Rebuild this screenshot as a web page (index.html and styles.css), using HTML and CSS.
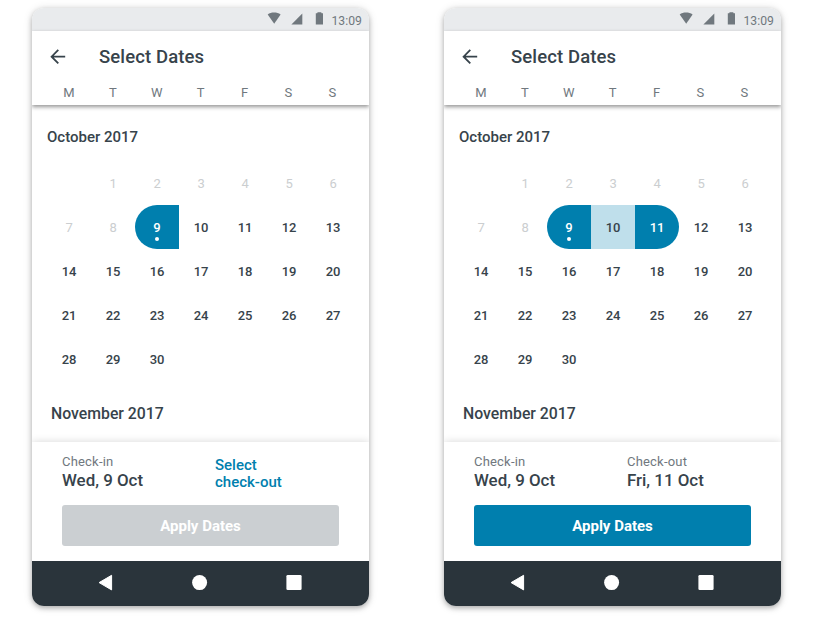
FILE: index.html
```html
<!DOCTYPE html>
<html lang="en">
<head>
<meta charset="utf-8">
<title>Select Dates</title>
<link rel="stylesheet" href="styles.css">
</head>
<body>
<main class="stage">
  <section class="phone">
    <div class="status">
      <svg class="wifi" width="14" height="12" viewBox="0 0 14 12"><path d="M0.7 2.4C4 0 10 0 13.6 2.4L7.2 11.7Z"/></svg>
      <svg class="signal" width="12" height="12" viewBox="0 0 12 12"><path d="M0.4 11.5L11.3 0.5V11.5Z"/></svg>
      <svg class="battery" width="8" height="13" viewBox="0 0 8 13"><path d="M2.6 0.3H6.2L6.6 1.3H8V12.5H0.8V1.3H2.2Z"/></svg>
      <span class="time">13:09</span>
    </div>
    <header class="header">
      <div class="titlebar">
        <svg class="back" width="16" height="16" viewBox="0 0 16 16"><path d="M15.2 7.7H1.6M8.3 0.9L1.6 7.7L8.3 14.4"/></svg>
        <h1>Select Dates</h1>
      </div>
      <div class="weekdays"><span>M</span><span>T</span><span>W</span><span>T</span><span>F</span><span>S</span><span>S</span></div>
    </header>
    <div class="calendar">
      <h2>October 2017</h2>
      <div class="days">
        <span></span><span class="past">1</span><span class="past">2</span><span class="past">3</span><span class="past">4</span><span class="past">5</span><span class="past">6</span>
        <span class="past">7</span><span class="past">8</span><span class="start">9</span><span>10</span><span>11</span><span>12</span><span>13</span>
        <span>14</span><span>15</span><span>16</span><span>17</span><span>18</span><span>19</span><span>20</span>
        <span>21</span><span>22</span><span>23</span><span>24</span><span>25</span><span>26</span><span>27</span>
        <span>28</span><span>29</span><span>30</span>
      </div>
      <h2 class="next-month">November 2017</h2>
    </div>
    <footer class="summary">
      <div class="stay">
        <div class="field"><small>Check-in</small><strong>Wed, 9 Oct</strong></div>
        <a class="prompt">Select<br>check-out</a>
      </div>
      <button class="apply disabled">Apply Dates</button>
    </footer>
    <nav class="nav">
      <svg width="16" height="18" viewBox="0 0 16 18"><path d="M1.1 8.6L13.6 1.3V15.9Z" stroke="#fff" stroke-linejoin="round"/></svg>
      <svg width="16" height="16" viewBox="0 0 16 16"><circle cx="7.6" cy="7.6" r="7.5"/></svg>
      <svg width="16" height="16" viewBox="0 0 16 16"><rect x="0.4" y="0" width="15.2" height="15" rx="1.3"/></svg>
    </nav>
  </section>

  <section class="phone">
    <div class="status">
      <svg class="wifi" width="14" height="12" viewBox="0 0 14 12"><path d="M0.7 2.4C4 0 10 0 13.6 2.4L7.2 11.7Z"/></svg>
      <svg class="signal" width="12" height="12" viewBox="0 0 12 12"><path d="M0.4 11.5L11.3 0.5V11.5Z"/></svg>
      <svg class="battery" width="8" height="13" viewBox="0 0 8 13"><path d="M2.6 0.3H6.2L6.6 1.3H8V12.5H0.8V1.3H2.2Z"/></svg>
      <span class="time">13:09</span>
    </div>
    <header class="header">
      <div class="titlebar">
        <svg class="back" width="16" height="16" viewBox="0 0 16 16"><path d="M15.2 7.7H1.6M8.3 0.9L1.6 7.7L8.3 14.4"/></svg>
        <h1>Select Dates</h1>
      </div>
      <div class="weekdays"><span>M</span><span>T</span><span>W</span><span>T</span><span>F</span><span>S</span><span>S</span></div>
    </header>
    <div class="calendar">
      <h2>October 2017</h2>
      <div class="days">
        <span></span><span class="past">1</span><span class="past">2</span><span class="past">3</span><span class="past">4</span><span class="past">5</span><span class="past">6</span>
        <span class="past">7</span><span class="past">8</span><span class="start">9</span><span class="between">10</span><span class="end">11</span><span>12</span><span>13</span>
        <span>14</span><span>15</span><span>16</span><span>17</span><span>18</span><span>19</span><span>20</span>
        <span>21</span><span>22</span><span>23</span><span>24</span><span>25</span><span>26</span><span>27</span>
        <span>28</span><span>29</span><span>30</span>
      </div>
      <h2 class="next-month">November 2017</h2>
    </div>
    <footer class="summary">
      <div class="stay">
        <div class="field"><small>Check-in</small><strong>Wed, 9 Oct</strong></div>
        <div class="field"><small>Check-out</small><strong>Fri, 11 Oct</strong></div>
      </div>
      <button class="apply">Apply Dates</button>
    </footer>
    <nav class="nav">
      <svg width="16" height="18" viewBox="0 0 16 18"><path d="M1.1 8.6L13.6 1.3V15.9Z" stroke="#fff" stroke-linejoin="round"/></svg>
      <svg width="16" height="16" viewBox="0 0 16 16"><circle cx="7.6" cy="7.6" r="7.5"/></svg>
      <svg width="16" height="16" viewBox="0 0 16 16"><rect x="0.4" y="0" width="15.2" height="15" rx="1.3"/></svg>
    </nav>
  </section>
</main>
</body>
</html>
```
FILE: styles.css
```css
* { box-sizing: border-box; }
body {
  margin: 0;
  height: 622px;
  overflow: hidden;
  background: #fff;
  color: #37434b;
  font-family: Roboto, "Liberation Sans", sans-serif;
}
h1, h2 { margin: 0; font-weight: 500; }
.stage { display: flex; gap: 75px; padding: 8px 32px; }
.phone {
  display: flex;
  flex-direction: column;
  width: 337px;
  height: 598px;
  flex: none;
  border-radius: 12px;
  overflow: hidden;
  background: #fff;
  box-shadow: 0 2px 5px rgba(0, 0, 0, .25), 0 1px 10px rgba(0, 0, 0, .14);
}
.status {
  display: flex;
  align-items: center;
  justify-content: flex-end;
  height: 23px;
  flex: none;
  padding-right: 7px;
  background: #e9ebed;
  color: #70787e;
  fill: #70787e;
}
.wifi { margin: -3px 10px 0 0; }
.signal { margin: -1px 12px 0 0; }
.battery { margin: -2px 8px 0 0; }
.time { font-size: 12.2px; letter-spacing: .05px; line-height: 14px; padding-top: 2px; }
.header {
  position: relative;
  height: 74px;
  flex: none;
  background: #fff;
  box-shadow: 0 2px 4px rgba(0, 0, 0, .42);
}
.titlebar { display: flex; align-items: center; height: 51px; padding-left: 18px; }
.back { margin-right: 33px; fill: none; stroke: #37434b; stroke-width: 1.8; }
h1 { font-size: 18.5px; letter-spacing: .12px; }
.weekdays {
  display: grid;
  grid-template-columns: repeat(7, 43.9px);
  padding-left: 15px;
  text-align: center;
  font-size: 13px;
  line-height: 21px;
  color: #70787e;
}
.calendar { height: 337px; flex: none; padding: 23px 15px 0; }
h2 { font-size: 15px; line-height: 18px; }
.days {
  display: grid;
  grid-template-columns: repeat(7, 44px);
  grid-auto-rows: 44px;
  margin-top: 15px;
  text-align: center;
  font-size: 13px;
  font-weight: 500;
  line-height: 46px;
  letter-spacing: -.1px;
}
.past { color: #cbced0; font-weight: 400; }
.start, .end { background: #007fae; color: #fff; }
.start { position: relative; border-radius: 22px 0 0 22px; }
.start::after {
  content: "";
  position: absolute;
  left: 20px;
  top: 32px;
  width: 4px;
  height: 4px;
  border-radius: 50%;
  background: #fff;
}
.end { border-radius: 0 22px 22px 0; }
.between { background: #bfdfeb; }
.next-month { margin: 24px 0 0 4px; font-size: 15.8px; }
.summary {
  height: 119px;
  flex: none;
  padding: 12px 30px 0;
  background: #fff;
  box-shadow: 0 0 8px rgba(0, 0, 0, .16);
}
.stay { display: grid; grid-template-columns: 153px 1fr; height: 51px; }
.field { display: flex; flex-direction: column; }
.field small { font-size: 13px; letter-spacing: .2px; line-height: 16px; color: #70787e; }
.field strong { font-size: 16.9px; line-height: 21px; font-weight: 500; }
.prompt { padding-top: 3px; font-size: 15px; line-height: 17px; font-weight: 500; color: #007fae; }
.apply {
  display: block;
  width: 277px;
  height: 41px;
  padding: 0;
  border: 0;
  border-radius: 3px;
  background: #007fae;
  color: #fff;
  font: 700 15px Roboto, "Liberation Sans", sans-serif;
}
.apply.disabled { background: #cbcfd2; }
.nav {
  display: flex;
  align-items: center;
  justify-content: space-between;
  position: relative;
  height: 45px;
  padding: 0 67px 2px 66px;
  background: #2a343b;
  fill: #fff;
}
```
